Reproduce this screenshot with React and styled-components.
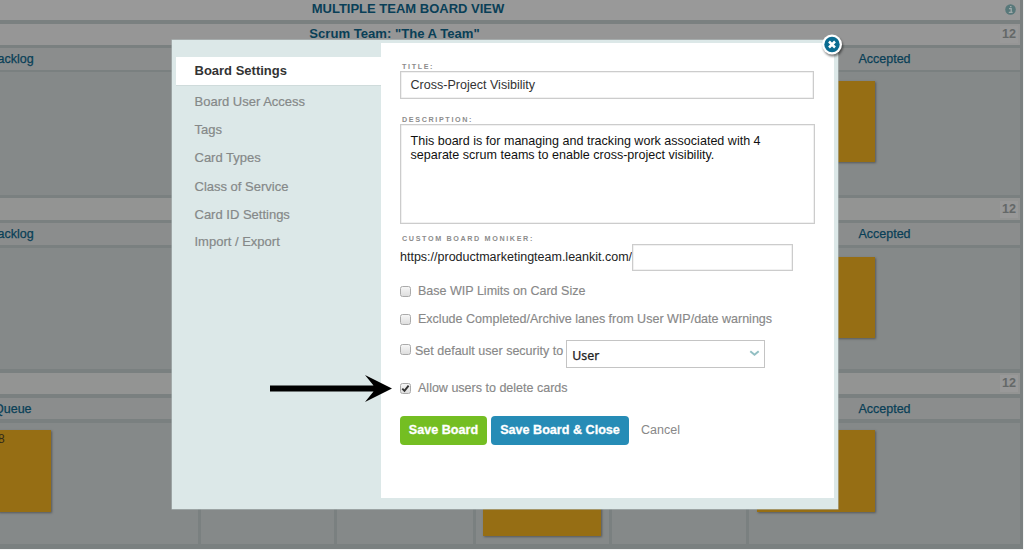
import React from "react";
import styled, { createGlobalStyle } from "styled-components";

const Global = createGlobalStyle`
  *, *::before, *::after { box-sizing: border-box; }
  html, body { margin: 0; padding: 0; }
  body {
    background: #f4f5f5;
    overflow: hidden;
    font-family: "Liberation Sans", Arial, sans-serif;
    font-size: 12px;
  }
`;

const Page = styled.main`
  position: relative;
  width: 1024px;
  height: 550px;
  overflow: hidden;
`;

const Board = styled.div`
  width: 1023px;
  height: 549px;
  padding-right: 3px;
  background: #7a8080;
  display: flex;
  flex-direction: column;
`;

const BoardHeader = styled.header`
  height: 20px;
  margin-bottom: 4px;
  padding: 0 4px 3px 0;
  background: #999;
  color: #093f57;
  display: grid;
  grid-template-columns: 16px 1fr 16px;
  align-items: center;
`;

const BoardTitle = styled.h1`
  margin: 0;
  padding-right: 200px;
  text-align: center;
  font-size: 13px;
  line-height: 17px;
  white-space: nowrap;
`;

const InfoIcon = styled.svg`
  width: 11px;
  height: 11px;
  justify-self: end;
  margin-top: 2px;
`;

const Lane = styled.section`
  display: grid;
  grid-template-rows: ${(p) => p.$rows};
  row-gap: ${(p) => p.$gap}px;
  margin-bottom: ${(p) => p.$after}px;
`;

const LaneHeader = styled.div`
  background: ${(p) => (p.$dark ? "#969696" : "#939493")};
  display: grid;
  grid-template-columns: 1fr 20px;
  align-items: center;
`;

const LaneTitle = styled.h2`
  margin: 0;
  padding: 0 211px 1px 0;
  text-align: center;
  color: #093f57;
  font-size: 13.1px;
  line-height: 18px;
  white-space: nowrap;
`;

const Count = styled.span`
  height: 17px;
  margin-right: 2px;
  background: #999;
  color: #646868;
  font-weight: bold;
  font-size: 12.6px;
  line-height: 16px;
  text-align: center;
`;

const Columns = styled.div`
  display: grid;
  grid-template-columns: 749px 271px;
  background: #8b8d8d;
`;

const ColumnName = styled.span`
  color: #093f57;
  font-size: 12.5px;
  line-height: 22px;
  text-align: ${(p) => (p.$first ? "left" : "center")};
  text-indent: ${(p) => p.$shift || 0}px;
  -webkit-text-stroke: 0.25px #093f57;
`;

const Cells = styled.div`
  display: grid;
  grid-template-columns: ${(p) => p.$columns || "1020px"};
  column-gap: 3px;
`;

const Cell = styled.div`
  background: #858989;
  padding: ${(p) => p.$pad || "9px 0 0 757px"};
`;

const Card = styled.div`
  width: ${(p) => p.$width || 118}px;
  height: ${(p) => p.$height || 82}px;
  padding: 2px 0 0 ${(p) => (p.$clipped ? 0 : 6)}px;
  margin-left: ${(p) => (p.$clipped ? -2 : 0)}px;
  background: #966e14;
  color: #332b18;
  font-size: 12px;
  box-shadow: 1px 1px 2px rgba(50, 50, 50, 0.55);
`;

const Dialog = styled.div`
  position: absolute;
  left: 172px;
  top: 40px;
  width: 666px;
  height: 469px;
  padding: 3px 4px 11px;
  background: #dce8e8;
  box-shadow: 0 0 0 0.5px #b4c0c0;
  display: grid;
  grid-template-columns: 205px 453px;
`;

const Tabs = styled.nav`
  padding-top: 14px;
  display: flex;
  flex-direction: column;
`;

const Tab = styled.a`
  height: 27.9px;
  padding-left: 18.5px;
  color: #858888;
  font-size: 13px;
  line-height: 28px;
  -webkit-text-stroke: 0.2px #858888;
  margin-top: ${(p) => p.$gap || 0}px;
`;

const ActiveTab = styled(Tab)`
  height: 28px;
  background: #fff;
  color: #333;
  font-weight: bold;
  -webkit-text-stroke: 0;
  box-shadow: 0 1px 0 #cfdbdb;
`;

const Panel = styled.form`
  background: #fff;
  padding: 19px 19px 0 19px;
  display: flex;
  flex-direction: column;
  align-items: flex-start;
`;

const Label = styled.label`
  height: 9px;
  padding-left: 2px;
  margin-top: ${(p) => p.$gap || 0}px;
  color: #8c8c8c;
  font-size: 7.2px;
  font-weight: bold;
  line-height: 9px;
  letter-spacing: 1.63px;
  white-space: nowrap;
`;

const Field = styled.div`
  width: ${(p) => p.$width}px;
  height: ${(p) => p.$height}px;
  padding: ${(p) => p.$pad || "0"};
  border: 1.5px solid #ccc;
  box-shadow: inset 0 0 0 0.5px #e4e4e4;
  color: ${(p) => p.$color || "#111"};
  font-size: 12.55px;
  line-height: 14px;
  white-space: pre;
`;

const AddressRow = styled.div`
  display: flex;
  margin-top: 1px;
  color: #222;
`;

const Address = styled.span`
  width: 232px;
  padding-top: 5px;
  font-size: 12.5px;
  line-height: 16px;
  white-space: nowrap;
`;

const Option = styled.div`
  height: ${(p) => p.$height || 16}px;
  margin-top: ${(p) => p.$gap}px;
  display: flex;
  align-items: center;
  color: #888;
  font-size: 12.53px;
`;

const Box = styled.span`
  width: 11px;
  height: 11px;
  margin-bottom: ${(p) => p.$raise || 0}px;
  flex: none;
  border: 1px solid #aaa;
  border-radius: 2.5px;
  background: linear-gradient(#f6f6f6, #dedede);
  display: grid;
  place-items: center;
`;

const OptionText = styled.span`
  margin-left: ${(p) => p.$left || 7}px;
  margin-bottom: ${(p) => p.$raise || 0}px;
  white-space: nowrap;
  -webkit-text-stroke: 0.15px #888;
`;

const Select = styled.div`
  width: 199px;
  height: 28px;
  margin-left: 3px;
  padding: 2px 4px 0 5px;
  border: 1.5px solid #c4c4c4;
  display: flex;
  align-items: center;
  justify-content: space-between;
  color: #222;
  font-family: "Noto Sans", sans-serif;
  font-size: 12.4px;
  -webkit-text-stroke: 0.25px #222;
`;

const Chevron = styled.svg`
  width: 11px;
  height: 7px;
  margin-bottom: 3px;
`;

const Actions = styled.div`
  display: flex;
  align-items: center;
  gap: 4px;
  margin-top: 20px;
`;

const Button = styled.button`
  width: ${(p) => p.$width}px;
  height: 29px;
  padding: 0 0 1px;
  border: 0;
  border-radius: 4px;
  background: ${(p) => p.$color};
  color: #fff;
  font-family: inherit;
  font-size: 12.6px;
  font-weight: bold;
  white-space: nowrap;
  -webkit-text-stroke: 0.3px #fff;
`;

const Cancel = styled.a`
  margin: 0 0 1px 8px;
  color: #888;
  font-size: 12.5px;
`;

const Close = styled.svg`
  position: absolute;
  left: 645px;
  top: -10px;
  width: 32px;
  height: 32px;
  filter: drop-shadow(1px 2px 1px rgba(0, 0, 0, 0.5));
`;

const Arrow = styled.svg`
  position: absolute;
  left: 268px;
  top: 372px;
  width: 126px;
  height: 32px;
`;

function LaneBlock({ rows, gap, after, title, name, shift, children }) {
  return (
    <Lane $rows={rows} $gap={gap} $after={after}>
      <LaneHeader $dark={!!title}>
        <LaneTitle>{title}</LaneTitle>
        <Count>12</Count>
      </LaneHeader>
      <Columns>
        <ColumnName $first $shift={shift}>{name}</ColumnName>
        <ColumnName>Accepted</ColumnName>
      </Columns>
      {children}
    </Lane>
  );
}

const tabs = [
  { label: "Board User Access", gap: 3 },
  { label: "Tags" },
  { label: "Card Types" },
  { label: "Class of Service", gap: 1 },
  { label: "Card ID Settings" },
  { label: "Import / Export" },
];

export default function App() {
  return (
    <Page>
      <Global />
      <Board>
        <BoardHeader>
          <span />
          <BoardTitle>MULTIPLE TEAM BOARD VIEW</BoardTitle>
          <InfoIcon viewBox="0 0 11 11">
            <circle cx="5.5" cy="5.5" r="5.3" fill="#58787a" />
            <path d="M4 4.7h2.2v3.5M3.8 8.3h3.8M5 2.7h1.5" stroke="#a0aaaa" strokeWidth="1.3" fill="none" />
          </InfoIcon>
        </BoardHeader>
        <LaneBlock rows="21px 22px 123px" gap={2.5} after={3} title={'Scrum Team: "The A Team"'} name="acklog" shift={-2.5}>
          <Cells><Cell><Card $height={81} /></Cell></Cells>
        </LaneBlock>
        <LaneBlock rows="22px 22px 121px" gap={3} after={4} name="acklog" shift={-2.5}>
          <Cells><Cell $pad="8.5px 0 0 757px"><Card $height={81} /></Cell></Cells>
        </LaneBlock>
        <LaneBlock rows="21px 21px 121px" gap={4} after={5} name="Queue" shift={-6}>
          <Cells $columns="198px 133px 136px 133px 134px 271px">
            <Cell $pad="7px 0 0 0"><Card $width={53} $clipped>8</Card></Cell>
            <Cell $pad="0" />
            <Cell $pad="0" />
            <Cell $pad="7px 0 0 7px"><Card $height={106} /></Cell>
            <Cell $pad="0" />
            <Cell $pad="7px 0 0 8px"><Card /></Cell>
          </Cells>
        </LaneBlock>
      </Board>

      <Dialog>
        <Tabs>
          <ActiveTab>Board Settings</ActiveTab>
          {tabs.map((t) => (
            <Tab key={t.label} $gap={t.gap}>{t.label}</Tab>
          ))}
        </Tabs>
        <Panel>
          <Label>TITLE:</Label>
          <Field $width={414} $height={28} $pad="5.5px 9.5px" $color="#333">Cross-Project Visibility</Field>
          <Label $gap={16}>DESCRIPTION:</Label>
          <Field $width={415} $height={100} $pad="9px 9.5px">
            {"This board is for managing and tracking work associated with 4\nseparate scrum teams to enable cross-project visibility."}
          </Field>
          <Label $gap={10}>CUSTOM BOARD MONIKER:</Label>
          <AddressRow>
            <Address>https://productmarketingteam.leankit.com/</Address>
            <Field $width={161} $height={27} />
          </AddressRow>
          <Option $gap={12}><Box /><OptionText>Base WIP Limits on Card Size</OptionText></Option>
          <Option $gap={12}><Box /><OptionText>Exclude Completed/Archive lanes from User WIP/date warnings</OptionText></Option>
          <Option $gap={13} $height={28}>
            <Box $raise={9} />
            <OptionText $left={4} $raise={6}>Set default user security to</OptionText>
            <Select>
              User
              <Chevron viewBox="0 0 11 7">
                <path d="M1.3 1.2l4.2 3.6 4.2-3.6" fill="none" stroke="#93bfc3" strokeWidth="2" />
              </Chevron>
            </Select>
          </Option>
          <Option $gap={12}>
            <Box>
              <svg width="9" height="9" viewBox="0 0 9 9">
                <path d="M1.3 4.6l2.2 2.3L7.6 1.6" fill="none" stroke="#333" strokeWidth="1.9" />
              </svg>
            </Box>
            <OptionText>Allow users to delete cards</OptionText>
          </Option>
          <Actions>
            <Button type="button" $width={87} $color="#74be22">Save Board</Button>
            <Button type="button" $width={138} $color="#268cb6">Save Board &amp; Close</Button>
            <Cancel>Cancel</Cancel>
          </Actions>
        </Panel>
        <Close viewBox="0 0 32 32">
          <circle cx="15" cy="14.5" r="10" fill="#fff" />
          <circle cx="15" cy="14.5" r="7.7" fill="#0b6c91" />
          <path d="M12 11.5l6 6M18 11.5l-6 6" stroke="#fff" strokeWidth="2.5" />
        </Close>
      </Dialog>

      <Arrow viewBox="0 0 126 32">
        <path d="M2 13.5H105.500L97 3L124 16.500L97 30L105.500 19.500H2Z" fill="#000" />
      </Arrow>
    </Page>
  );
}
